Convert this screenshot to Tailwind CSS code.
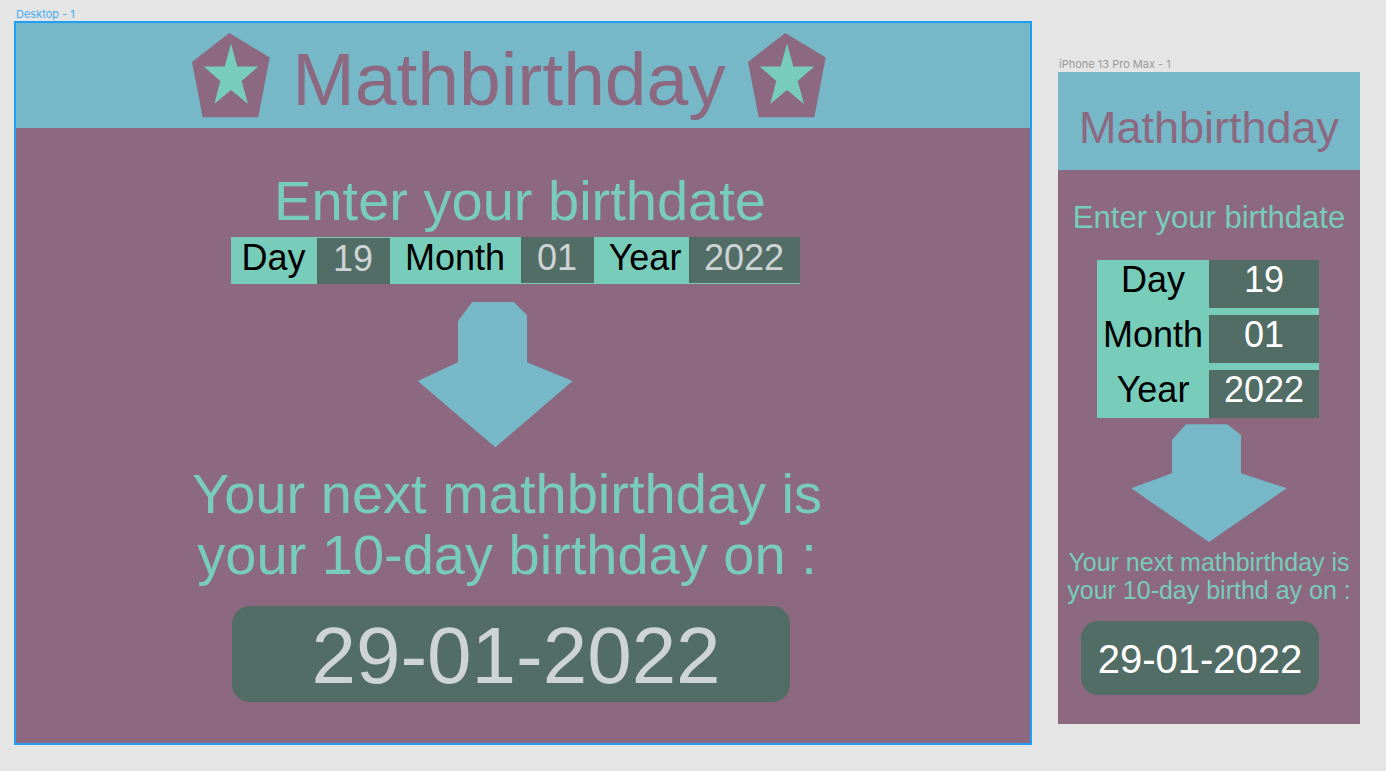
<!DOCTYPE html>
<html lang="en">
<head>
<meta charset="utf-8">
<meta name="viewport" content="width=device-width, initial-scale=1">
<title>Mathbirthday</title>
<script src="https://cdn.jsdelivr.net/npm/@tailwindcss/browser@4"></script>
</head>
<body class="min-h-screen bg-[#e5e5e5] font-['Liberation_Sans',sans-serif]">
<svg class="hidden" aria-hidden="true">
  <symbol id="badge" viewBox="0 0 78 85">
    <path fill="#8c6980" d="M37.3 0 77.7 24.6 66.3 84.3H10.7L0 29Z"/>
    <path fill="#78ccba" d="M39 10.6 45.3 33.6H66.3L49.7 48 56 71 39 57 22.3 71 28.3 48 11.7 33.6H32.7Z"/>
  </symbol>
</svg>
<div class="grid grid-cols-[1018fr_302fr] items-start gap-[26px] pr-[26px] pl-[14px]">

  <section class="pt-[7px]">
    <h2 class="pl-0.5 font-[Inter,sans-serif] text-[11px] leading-[14px] text-[#4aabf0]">Desktop - 1</h2>
    <div class="border-2 border-[#1f9ef5] bg-[#8c6980] pb-[41px]">
      <header class="flex h-[105px] items-center justify-center gap-[22px] bg-[#76b7c8] pr-[28px] pb-px">
        <svg class="h-[85px] w-[78px]" aria-hidden="true"><use href="#badge"/></svg>
        <h1 class="pt-2 text-[75px] leading-[80px] whitespace-nowrap text-[#8c6980]">Mathbirthday</h1>
        <svg class="h-[85px] w-[78px]" aria-hidden="true"><use href="#badge"/></svg>
      </header>
      <h3 class="mt-[41px] pr-[6px] text-center text-[56px] leading-[64px] text-[#78ccba]">Enter your birthdate</h3>
      <form class="mt-[4px] flex justify-center pr-[16px] text-[36px]">
        <div class="grid h-[47px] w-[569px] grid-cols-[86fr_73fr_131fr_73fr_95fr_111fr] bg-[#78ccba] leading-[40px]">
          <label for="d-day" class="pt-px text-center">Day</label>
          <input id="d-day" value="19" class="mt-px min-w-0 bg-[#526d65] pb-[4px] text-center text-[#ced3d5]">
          <label for="d-month" class="pt-px text-center">Month</label>
          <input id="d-month" value="01" class="mb-px min-w-0 bg-[#526d65] pb-[4px] text-center text-[#ced3d5]">
          <label for="d-year" class="pt-px pl-2 text-center">Year</label>
          <input id="d-year" value="2022" class="mb-px min-w-0 bg-[#526d65] pb-[4px] text-center text-[#ced3d5]">
        </div>
      </form>
      <div class="mt-[18px] flex justify-center pr-[56px]">
        <svg class="h-[146px] w-[156px]" viewBox="0 0 156 146" aria-hidden="true"><path fill="#76b7c8" d="M55.3 0H96.7L110 13V60.3L155.7 79 78.3 145.3.7 79 41 60.3V19Z"/></svg>
      </div>
      <p class="mt-[15px] pr-[32px] text-center text-[56px] leading-[61px] text-[#78ccba]">Your next mathbirthday is<br>your 10-day birthday on :</p>
      <div class="mt-[21px] flex justify-center pr-[24px]">
        <output class="flex h-[96px] w-[558px] items-center justify-center rounded-[18px] bg-[#526d65] pt-1 pl-2.5 text-[80px] leading-[80px] text-[#ced3d5]">29-01-2022</output>
      </div>
    </div>
  </section>

  <section class="pt-[57px]">
    <h2 class="pl-px font-[Inter,sans-serif] text-[11px] leading-[15px] text-[#999]">iPhone 13 Pro Max - 1</h2>
    <div class="bg-[#8c6980] pb-[29px]">
      <header class="flex h-[98px] items-center justify-center bg-[#76b7c8]">
        <h1 class="pt-3.5 text-[45px] leading-[48px] text-[#8c6980]">Mathbirthday</h1>
      </header>
      <h3 class="mt-[32px] text-center text-[31px] leading-[32px] whitespace-nowrap text-[#78ccba]">Enter your birthdate</h3>
      <form class="mt-[26px] flex justify-center pr-[2px] text-[36px]">
        <div class="grid w-[222px] grid-cols-[112fr_110fr] gap-y-[7px] bg-[#78ccba] leading-[40px]">
          <label for="m-day" class="text-center">Day</label>
          <input id="m-day" value="19" class="h-[48px] min-w-0 bg-[#526d65] pb-2 text-center text-white">
          <label for="m-month" class="text-center">Month</label>
          <input id="m-month" value="01" class="h-[48px] min-w-0 bg-[#526d65] pb-2 text-center text-white">
          <label for="m-year" class="text-center">Year</label>
          <input id="m-year" value="2022" class="h-[48px] min-w-0 bg-[#526d65] pb-2 text-center text-white">
        </div>
      </form>
      <div class="mt-[6px] flex justify-center">
        <svg class="h-[118px] w-[156px]" viewBox="0 0 156 118" aria-hidden="true"><path fill="#76b7c8" d="M55 .3H96.3L110 11V49.3L155.7 64.3 78 118 .3 64.3 41 49.3V16Z"/></svg>
      </div>
      <p class="mt-[6px] text-center text-[25px] leading-[28px] whitespace-nowrap text-[#78ccba]">Your next mathbirthday is<br>your 10-day birthd ay on :</p>
      <div class="mt-[17px] flex justify-center pr-[18px]">
        <output class="flex h-[74px] w-[238px] items-center justify-center rounded-[17px] bg-[#526d65] pt-0.5 text-[40px] leading-[44px] text-white">29-01-2022</output>
      </div>
    </div>
  </section>
</div>
</body>
</html>
